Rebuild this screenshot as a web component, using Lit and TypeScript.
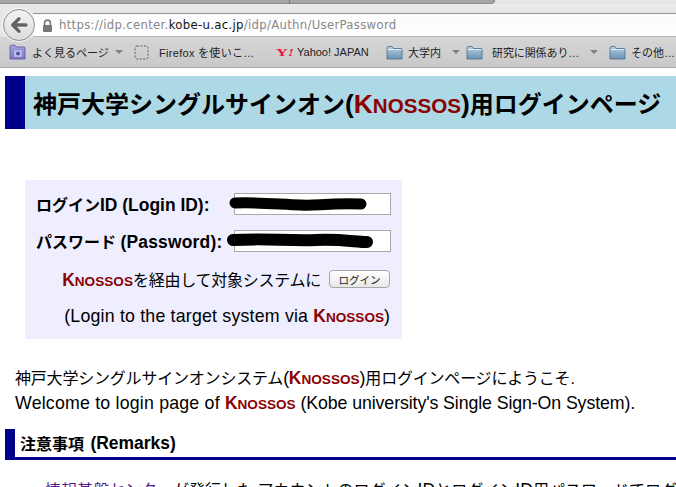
import { LitElement, html, css, svg } from "lit";
import { customElement } from "lit/decorators.js";

const knossos = html`<span class="kn">K<small>NOSSOS</small></span>`;
const folder = svg`<svg class="ficon" width="17" height="15" viewBox="0 0 17 15"><defs><linearGradient id="fg" x1="0" y1="0" x2="0" y2="1"><stop offset="0" stop-color="#b4cde0"/><stop offset="1" stop-color="#6b94b6"/></linearGradient></defs><path d="M1 3 Q1 1.5 2.5 1.5 H6 L7.5 3.5 H15 Q16 3.5 16 4.5 V14 H1 Z" fill="url(#fg)" stroke="#55748f" stroke-width="0.9"/><path d="M1.6 4.6 H15.4" stroke="#e4eef5" stroke-width="1"/></svg>`;
const caret = html`<span class="caret"></span>`;

@customElement("app-root")
export class AppRoot extends LitElement {
  static styles = css`
    :host { display: block; width: 676px; height: 487px; overflow: hidden; background: #fff; font-family: "Liberation Sans", "Noto Sans CJK JP", sans-serif; color: #000; }
    .chrome { height: 68px; display: flex; flex-direction: column; border-bottom: 1px solid #a9a9a9; box-sizing: border-box; position: relative; background: #e8e8e8; }
    .tabs { height: 4px; display: flex; background: #e6e6e6; flex: none; }
    .tab-a { width: 290px; background: #a6a6a6; border-right: 1px solid #7c7c7c; box-sizing: border-box; border-bottom: 1px solid #8c8c8c; }
    .tab-b { width: 205px; background: #a6a6a6; border-right: 1px solid #7c7c7c; border-bottom: 1px solid #8c8c8c; border-bottom-right-radius: 4px; box-sizing: border-box; }
    .band { height: 9px; flex: none; background: linear-gradient(#ececec, #e4e4e4); }
    .nav { height: 24px; flex: none; padding-left: 33px; display: flex; background: #e6e6e6; }
    .url { flex: 1; background: linear-gradient(#fbfbfb, #fff); border-top: 1px solid #969696; border-bottom: 1px solid #b4b4b4; box-sizing: border-box; display: flex; align-items: center; padding-left: 9px; gap: 6px; letter-spacing: 0.3px; color: #888; font-family: "DejaVu Sans", "Liberation Sans", sans-serif; font-size: 11.7px; white-space: nowrap; }
    .url b { font-weight: normal; color: #111; }
    .back { position: absolute; left: 3px; top: 9px; width: 32px; height: 32px; border-radius: 50%; border: 1px solid #8f8f8f; background: linear-gradient(#f2f2f2, #dcdcdc); box-shadow: 0 0 0 1px rgba(255,255,255,.7); box-sizing: border-box; display: flex; align-items: center; justify-content: center; z-index: 1; }
    .bm { height: 30px; flex: none; background: linear-gradient(#d6d6d6, #c9c9c9); display: grid; grid-template-columns: 125px 25px 117px 110px 80px 143px 1fr; align-items: center; font-size: 11px; color: #222; white-space: nowrap; padding-left: 9px; box-sizing: border-box; }
    .bmi { display: flex; align-items: center; gap: 5px; overflow: visible; }
    .first { gap: 6px; }
    .caret { width: 0; height: 0; border-left: 4px solid transparent; border-right: 4px solid transparent; border-top: 4px solid #808080; display: inline-block; }
    .c3 { margin-left: 6px; }
    .f2t { margin-left: 4px; letter-spacing: -0.1px; }
    .fx { letter-spacing: 0.3px; }
    .ylogo { color: #ee1038; font: bold 11px "Liberation Serif", serif; width: 16px; display: inline-block; transform: scaleX(1.5); transform-origin: left center; }
    .ylogo i { font-size: 10px; }
    .ficon { flex: none; display: block; }
    .page { padding: 8px 0 0 5px; }
    .h1 { height: 53px; background: #add8e6; border-left: 20px solid #00008b; padding-left: 8px; display: flex; align-items: center; font-size: 24px; font-weight: bold; white-space: nowrap; box-sizing: border-box; }
    .h1 > span { white-space: pre; }
    .lat { font-size: 1.11em; }
    .wide { letter-spacing: 0.2px; }
    .narrow { letter-spacing: -0.1px; }
    .tight { letter-spacing: -0.2px; }
    .blat { font-size: 1.09em; }
    .h1 .blat { font-size: 1.1em; }
    .kn { color: #8b0000; font-weight: bold; font-size: 1.09em; letter-spacing: 0; }
    .h1 .kn { font-size: 1em; }
    .kn small { font-size: 0.78em; }
    .form { margin: 51px 0 0 20px; width: 377px; height: 159px; background: #eeeeff; box-sizing: border-box; padding: 13px 11px 0 11px; font-size: 16px; }
    .row { display: flex; align-items: center; height: 22px; font-weight: bold; white-space: nowrap; }
    .row + .row { margin-top: 15px; }
    .label { width: 198px; flex: none; }
    .field { background: #fff; border: 1px solid #a9a9a9; height: 22px; box-sizing: border-box; flex: 1; position: relative; }
    .scribble { position: absolute; left: -9px; top: 1px; }
    .via { display: flex; justify-content: flex-end; align-items: center; gap: 8px; margin-top: 15px; height: 24px; white-space: nowrap; padding-right: 1px; }
    .via > span { letter-spacing: -0.25px; }
    button { font: 10.5px "Liberation Sans", "Noto Sans CJK JP", sans-serif; width: 61px; height: 18px; padding: 0; border: 1px solid #a6a6a6; border-radius: 4px; background: linear-gradient(#fff, #e8e8e8); color: #222; }
    .en { text-align: right; margin-top: 13px; height: 24px; line-height: 24px; white-space: nowrap; font-size: 16px; padding-right: 1px; }
    .welcome { margin: 27px 0 0 10px; font-size: 16px; white-space: nowrap; }
    .wl { height: 25px; line-height: 25px; }
    .h2 { margin-top: 13px; height: 31px; border-left: 10px solid #00008b; border-bottom: 3px solid #00008b; padding-left: 5px; box-sizing: border-box; font-size: 16px; font-weight: bold; display: flex; align-items: center; white-space: pre; }
    .h2 .blat { margin-left: 2px; }
    .body { margin: 17px 0 0 40px; font-size: 16px; white-space: nowrap; }
    .body a { color: #551a8b; text-decoration: underline; }
  `;

  render() {
    return html`
      <div class="chrome">
        <div class="tabs"><div class="tab-a"></div><div class="tab-b"></div></div>
        <div class="band"></div>
        <div class="nav">
          <div class="url">
            <svg width="11" height="13" viewBox="0 0 11 13"><path d="M2.6 6 V4 a2.9 2.9 0 0 1 5.8 0 V6" fill="none" stroke="#777" stroke-width="1.6"/><rect x="1" y="6" width="9" height="7" rx="1" fill="#777"/></svg>
            <span>https://idp.center.<b>kobe-u.ac.jp</b>/idp/Authn/UserPassword</span>
          </div>
        </div>
        <div class="back"><svg width="20" height="18" viewBox="0 0 20 18"><path d="M17 9 H4 M10 2.8 L3.6 9 L10 15.2" fill="none" stroke="#fff" stroke-width="4.6" stroke-linecap="round" stroke-linejoin="round" opacity=".8"/><path d="M17 9 H4 M10 2.8 L3.6 9 L10 15.2" fill="none" stroke="#646464" stroke-width="3.4" stroke-linecap="round" stroke-linejoin="round"/></svg></div>
        <div class="bm">
          <span class="bmi first"><svg class="ficon" width="17" height="16" viewBox="0 0 17 16"><defs><linearGradient id="pg" x1="0" y1="0" x2="0" y2="1"><stop offset="0" stop-color="#a9a6e2"/><stop offset="1" stop-color="#7a76c4"/></linearGradient></defs><path d="M1 3 Q1 1.2 2.5 1.2 H6 L7.5 3 H15 Q16 3 16 4 V15 H1 Z" fill="url(#pg)" stroke="#5f5ca0" stroke-width="0.9"/><rect x="5" y="6" width="8" height="7" fill="#c4c2ee" stroke="#8280c4" stroke-width=".5"/><circle cx="9" cy="9.5" r="2.1" fill="#5653a6"/></svg><span>よく見るページ</span>${caret}</span>
          <span class="bmi"><svg class="ficon" width="15" height="15" viewBox="0 0 15 15"><rect x="1" y="1" width="13" height="13" rx="2" fill="none" stroke="#5c5c5c" stroke-dasharray="2 1.5"/></svg></span>
          <span class="bmi fx">Firefox を使いこ…</span>
          <span class="bmi"><span class="ylogo">Y<i>!</i></span>Yahoo! JAPAN</span>
          <span class="bmi">${folder}<span>大学内</span><span class="caret c3"></span></span>
          <span class="bmi">${folder}<span class="f2t">研究に関係あり…</span><span class="caret c3"></span></span>
          <span class="bmi">${folder}<span>その他…</span></span>
        </div>
      </div>
      <div class="page">
        <div class="h1"><span>神戸大学シングルサインオン<span class="blat">(</span><span class="blat">${knossos}</span><span class="blat">)</span>用ログインページ</span></div>
        <div class="form">
          <div class="row"><span class="label">ログイン<span class="blat">ID (Login ID):</span></span><span class="field"><svg class="scribble" width="146" height="18" viewBox="0 0 146 18"><path d="M9 8 C30 7 50 9 75 10 C90 11 100 8 135 9" fill="none" stroke="#000" stroke-width="11" stroke-linecap="round"/></svg></span></div>
          <div class="row"><span class="label">パスワード <span class="blat wide">(Password):</span></span><span class="field"><svg class="scribble" width="154" height="20" viewBox="0 0 154 20"><path d="M7 8 C40 6 60 9 90 8 C115 7 130 10 141 10" fill="none" stroke="#000" stroke-width="12" stroke-linecap="round"/></svg></span></div>
          <div class="via"><span>${knossos}を経由して対象システムに</span><button>ログイン</button></div>
          <div class="en"><span class="lat wide">(Login to the target system via </span>${knossos}<span class="lat">)</span></div>
        </div>
        <div class="welcome">
          <div class="wl tight">神戸大学シングルサインオンシステム<span class="lat">(</span>${knossos}<span class="lat">)</span>用ログインページにようこそ.</div>
          <div class="wl"><span class="lat wide">Welcome to login page of </span>${knossos}<span class="lat narrow"> (Kobe university's Single Sign-On System).</span></div>
        </div>
        <div class="h2">注意事項 <span class="blat">(Remarks)</span></div>
        <div class="body"><a>情報基盤センター</a>が発行した アカウントのログイン<span class="lat">ID</span>とログイン<span class="lat">ID</span>用パスワードでログイン</div>
      </div>
    `;
  }
}
